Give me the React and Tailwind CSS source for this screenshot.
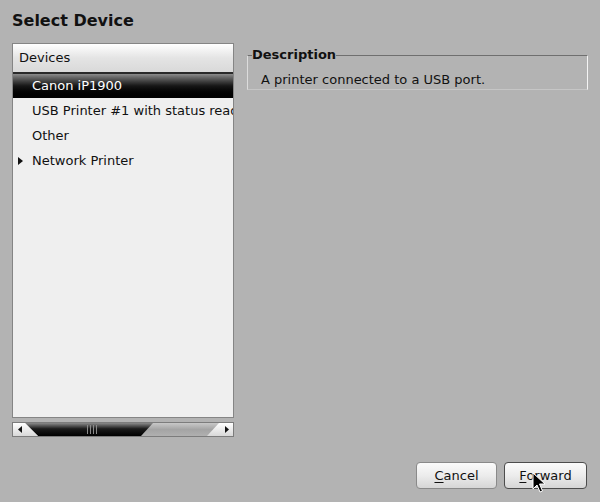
const rows = [
  { label: "USB Printer #1 with status readback" },
  { label: "Other" },
  { label: "Network Printer", expander: true },
];

function Scrollbar() {
  return (
    <div className="mt-[4px] h-[15px] w-[222px] border border-[#7c7c7c] bg-[#a9a9a9]">
      <svg width="220" height="13" viewBox="0 0 220 13" className="block">
        <defs>
          <linearGradient id="thumb" x1="0" y1="0" x2="0" y2="1">
            <stop offset="0" stopColor="#8a8a8a" />
            <stop offset="0.45" stopColor="#1a1a1a" />
            <stop offset="1" stopColor="#000000" />
          </linearGradient>
          <linearGradient id="trough" x1="0" y1="0" x2="0" y2="1">
            <stop offset="0" stopColor="#c8c8c8" />
            <stop offset="0.5" stopColor="#a4a4a4" />
            <stop offset="1" stopColor="#b0b0b0" />
          </linearGradient>
          <linearGradient id="btn" x1="0" y1="0" x2="0" y2="1">
            <stop offset="0" stopColor="#ffffff" />
            <stop offset="1" stopColor="#d8d8d8" />
          </linearGradient>
        </defs>
        <rect x="0" y="0" width="220" height="13" fill="url(#trough)" />
        <polygon points="12,0 140,0 128,13 25,13" fill="url(#thumb)" />
        <rect x="74" y="2" width="1" height="9" fill="#8a8a8a" />
        <rect x="77" y="2" width="1" height="9" fill="#8a8a8a" />
        <rect x="80" y="2" width="1" height="9" fill="#8a8a8a" />
        <rect x="83" y="2" width="1" height="9" fill="#8a8a8a" />
        <polygon points="0,0 12,0 25,13 0,13" fill="url(#btn)" />
        <polygon points="206,0 220,0 220,13 194,13" fill="url(#btn)" />
        <polygon points="5,6.5 9,3 9,10" fill="#111" />
        <polygon points="216,6.5 212,3 212,10" fill="#111" />
      </svg>
    </div>
  );
}

function Button({ mnemonic, rest, focused }) {
  return (
    <button
      className={`h-[27px] rounded-[4px] border bg-gradient-to-b from-[#fbfbfb] via-[#ececec] to-[#d6d6d6] text-[13px] text-[#111] ${
        focused ? "w-[83px] border-[#4c4c4c]" : "w-[81px] border-[#8a8a8a]"
      }`}
    >
      <span className="underline underline-offset-2">{mnemonic}</span>
      {rest}
    </button>
  );
}

export default function App() {
  return (
    <div
      className="relative flex h-[502px] w-[600px] flex-col bg-[#b3b3b3] px-[12px] pt-[11px] text-[#111]"
      style={{ fontFamily: '"DejaVu Sans", sans-serif' }}
    >
      <h1 className="text-[16px] font-bold leading-[20px]">Select Device</h1>

      <div className="mt-[12px] flex gap-[13px]">
        <div className="flex w-[222px] flex-col">
          <div className="h-[375px] overflow-hidden border border-[#858585] bg-[#efefef]">
            <div className="flex h-[30px] items-center border-b-2 border-[#2a2a2a] bg-gradient-to-b from-[#ffffff] via-[#e4e4e4] to-[#d9d9d9] pl-[6px] text-[13px]">
              Devices
            </div>
            <div className="flex h-[24px] items-center whitespace-nowrap bg-gradient-to-b from-[#8c8c8c] via-[#161616] to-[#000000] pl-[19px] text-[13px] text-white">
              Canon iP1900
            </div>
            {rows.map((r) => (
              <div
                key={r.label}
                className="relative flex h-[25px] items-center whitespace-nowrap pl-[19px] text-[13px]"
              >
                {r.expander && (
                  <span className="absolute left-[5px] top-[9px] h-0 w-0 border-y-[4px] border-l-[5px] border-y-transparent border-l-[#111]" />
                )}
                {r.label}
              </div>
            ))}
          </div>
          <Scrollbar />
        </div>

        <div className="flex-1 pt-[12px]">
          <div className="relative h-[35px] border border-t-[#6f6f6f] border-l-[#dcdcdc] border-r-[#f4f4f4] border-b-[#c6c6c6] pl-[13px] pt-[16px] text-[13px] leading-[16px]">
            <span className="absolute -top-[10px] left-[4px] bg-[#b3b3b3] text-[13px] font-bold leading-[18px]">
              Description
            </span>
            A printer connected to a USB port.
          </div>
        </div>
      </div>

      <div className="mt-auto mb-[13px] flex justify-end gap-[7px] pr-[1px]">
        <Button mnemonic="C" rest="ancel" />
        <Button mnemonic="F" rest="orward" focused />
      </div>

      <svg
        className="absolute left-[532px] top-[472px]"
        width="14"
        height="22"
        viewBox="0 0 14 22"
      >
        <path
          d="M1 1 L1 17 L5 13 L8 20 L10.5 19 L7.5 12 L13 12 Z"
          fill="#000"
          stroke="#fff"
          strokeWidth="1"
        />
      </svg>
    </div>
  );
}
